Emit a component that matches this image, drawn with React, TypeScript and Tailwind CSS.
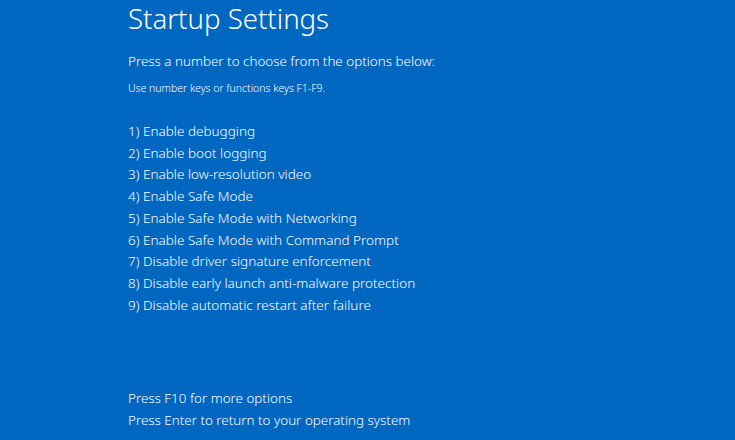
export default function App() {
  const options = [
    "1) Enable debugging",
    "2) Enable boot logging",
    "3) Enable low-resolution video",
    "4) Enable Safe Mode",
    "5) Enable Safe Mode with Networking",
    "6) Enable Safe Mode with Command Prompt",
    "7) Disable driver signature enforcement",
    "8) Disable early launch anti-malware protection",
    "9) Disable automatic restart after failure",
  ];

  return (
    <div
      className="w-[735px] h-[440px] bg-[#0067c0] text-white font-light overflow-hidden flex flex-col pl-[128px]"
      style={{ fontFamily: '"Noto Sans", "Open Sans", sans-serif' }}
    >
      <h1 className="text-[27.6px] leading-[36px]">Startup Settings</h1>
      <p className="text-[13.4px] leading-[20px] mt-[15px]">
        Press a number to choose from the options below:
      </p>
      <p className="text-[10.5px] leading-[14px] mt-[10px]">
        Use number keys or functions keys F1-F9.
      </p>
      <ul className="mt-[26px] flex flex-col">
        {options.map((o) => (
          <li key={o} className="text-[13.5px] leading-[21.7px]">
            {o}
          </li>
        ))}
      </ul>
      <div className="mt-auto mb-[9px] flex flex-col">
        <p className="text-[13.4px] leading-[22px]">Press F10 for more options</p>
        <p className="text-[13.4px] leading-[22px]">Press Enter to return to your operating system</p>
      </div>
    </div>
  );
}
